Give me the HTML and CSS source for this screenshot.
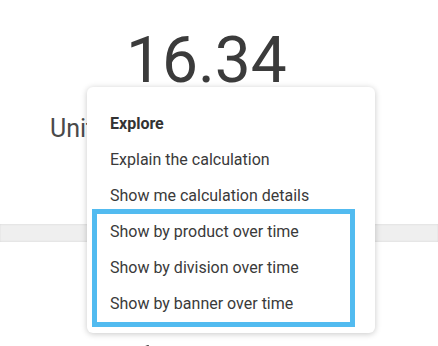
FILE: index.html
```html
<!DOCTYPE html>
<html lang="en">
<head>
    <meta charset="UTF-8">
    <meta name="viewport" content="width=device-width, initial-scale=1.0">
    <title>KPI Explore</title>
    <link rel="stylesheet" href="styles.css">
</head>
<body>
    <!-- KPI Card -->
    <section class="kpi-card">
        <div class="kpi-value">16.34</div>
        <div class="kpi-label">Units per transaction</div>
    </section>

    <!-- Divider between cards -->
    <div class="card-gap"></div>

    <!-- Next KPI Card (cut off at the bottom) -->
    <section class="kpi-card next">
        <div class="kpi-value">1</div>
    </section>

    <!-- Explore Menu -->
    <div class="explore-menu">
        <div class="menu-title">Explore</div>
        <div class="menu-item">Explain the calculation</div>
        <div class="menu-item">Show me calculation details</div>
        <div class="menu-group">
            <div class="menu-item">Show by product over time</div>
            <div class="menu-item">Show by division over time</div>
            <div class="menu-item">Show by banner over time</div>
        </div>
    </div>
</body>
</html>
```

FILE: styles.css
```css
/* General Styles */
html {
    overflow: hidden;
}

body {
    font-family: Roboto, "Liberation Sans", sans-serif;
    margin: 0;
    padding: 0;
    background-color: #fff;
    color: #3b3b3b;
    height: 346px;
    overflow: hidden;
    position: relative;
}

/* KPI Card Styles */
.kpi-card {
    height: 224px;
    padding-top: 29px;
    box-sizing: border-box;
}

.kpi-value {
    font-size: 64px;
    line-height: 64px;
    padding-left: 126px;
    color: #3b3b3b;
}

.kpi-label {
    font-size: 25px;
    line-height: 30px;
    margin-top: 21px;
    padding-left: 50px;
    color: #4a4a4a;
}

.kpi-card.next {
    height: 104px;
    padding-top: 96px;
    overflow: hidden;
}

.kpi-card.next .kpi-value {
    padding-left: 126px;
}

.card-gap {
    height: 18px;
    background-color: #efefef;
    box-shadow: inset 0 1px 2px rgba(0, 0, 0, 0.05), inset 0 -1px 2px rgba(0, 0, 0, 0.05);
}

/* Explore Menu Styles */
.explore-menu {
    position: absolute;
    left: 87px;
    top: 87px;
    width: 288px;
    height: 246px;
    box-sizing: border-box;
    padding-top: 19px;
    background-color: #fff;
    border-radius: 6px;
    box-shadow: 0 1px 6px rgba(0, 0, 0, 0.22);
}

.menu-title,
.menu-item {
    font-size: 16px;
    line-height: 36px;
    padding-left: 23px;
    color: #3a3a3a;
}

.menu-title {
    font-weight: bold;
    color: #333;
}

.menu-group {
    width: 253px;
    margin-left: 10px;
    outline: 5px solid #52bbf0;
}

.menu-group .menu-item {
    padding-left: 13px;
}
```
